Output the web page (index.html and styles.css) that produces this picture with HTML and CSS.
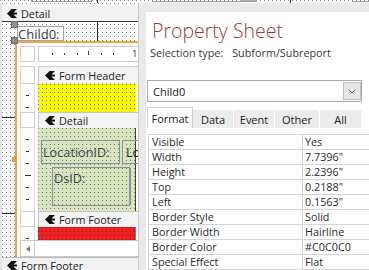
FILE: index.html
```html
<!DOCTYPE html>
<html lang="en">

<head>
    <meta charset="UTF-8">
    <title>Property Sheet</title>
    <link rel="stylesheet" href="styles.css">
</head>

<body>
    <div class="screen">
        <!-- bottom edge of the section above -->
        <div class="top-strip">
            <div class="ctl ctl-a"></div>
            <div class="ctl ctl-b"><span class="ctl-btn"></span></div>
            <div class="ctl ctl-c"></div>
        </div>

        <div class="main">
            <!-- design view -->
            <div class="designer">
                <div class="section-bar">
                    <svg class="bar-icon" width="10" height="9" viewBox="0 0 10 9"><path d="M0 4.5 L4.5 0 H10 L6.5 3.5 H10 V5.5 H6.5 L10 9 H4.5 Z" /></svg>
                    Detail
                </div>
                <div class="surface">
                    <span class="handle handle-label"></span>
                    <div class="label label-child">Child0:</div>
                    <span class="handle handle-sub"></span>
                    <span class="handle-mid"></span>

                    <div class="subform">
                        <div class="corner"></div>
                        <div class="ruler"><span class="ruler-num">1</span></div>

                        <div class="sel"></div>
                        <div class="bar">
                            <svg class="bar-icon" width="10" height="9" viewBox="0 0 10 9"><path d="M0 4.5 L4.5 0 H10 L6.5 3.5 H10 V5.5 H6.5 L10 9 H4.5 Z" /></svg>
                            Form Header
                        </div>

                        <div class="vticks"></div>
                        <div class="sec sec-yellow"></div>

                        <div class="sel"></div>
                        <div class="bar">
                            <svg class="bar-icon" width="10" height="9" viewBox="0 0 10 9"><path d="M0 4.5 L4.5 0 H10 L6.5 3.5 H10 V5.5 H6.5 L10 9 H4.5 Z" /></svg>
                            Detail
                        </div>

                        <div class="vticks"></div>
                        <div class="sec sec-green">
                            <div class="label label-loc">LocationID:</div>
                            <div class="label textbox">Lo</div>
                            <div class="label label-ds">DsID:</div>
                        </div>

                        <div class="sel"></div>
                        <div class="bar">
                            <svg class="bar-icon" width="10" height="9" viewBox="0 0 10 9"><path d="M0 4.5 L4.5 0 H10 L6.5 3.5 H10 V5.5 H6.5 L10 9 H4.5 Z" /></svg>
                            Form Footer
                        </div>

                        <div class="vticks"></div>
                        <div class="sec sec-red"></div>

                        <div class="hscroll">
                            <span class="sb-arrow"><span class="tri"></span></span>
                        </div>
                    </div>
                </div>
                <div class="section-bar section-bar-bottom">
                    <svg class="bar-icon" width="10" height="9" viewBox="0 0 10 9"><path d="M0 4.5 L4.5 0 H10 L6.5 3.5 H10 V5.5 H6.5 L10 9 H4.5 Z" /></svg>
                    Form Footer
                </div>
            </div>

            <!-- property sheet -->
            <div class="pane">
                <div class="sheet">
                    <h1 class="sheet-title">Property Sheet</h1>
                    <div class="selection">Selection type:<span class="sel-type">Subform/Subreport</span></div>

                    <div class="combo">
                        <span class="combo-text">Child0</span>
                        <span class="combo-btn">
                            <svg width="8" height="5" viewBox="0 0 8 5"><polyline points="0.5,0.5 4,4 7.5,0.5" /></svg>
                        </span>
                    </div>

                    <div class="tabs">
                        <span class="tab tab-active">Format</span>
                        <span class="tab tab-data">Data</span>
                        <span class="tab tab-event">Event</span>
                        <span class="tab tab-other">Other</span>
                        <span class="tab tab-all">All</span>
                    </div>

                    <div class="props">
                        <div class="prop-name">Visible</div><div class="prop-val">Yes</div>
                        <div class="prop-name">Width</div><div class="prop-val">7.7396"</div>
                        <div class="prop-name">Height</div><div class="prop-val">2.2396"</div>
                        <div class="prop-name">Top</div><div class="prop-val">0.2188"</div>
                        <div class="prop-name">Left</div><div class="prop-val">0.1563"</div>
                        <div class="prop-name">Border Style</div><div class="prop-val">Solid</div>
                        <div class="prop-name">Border Width</div><div class="prop-val">Hairline</div>
                        <div class="prop-name">Border Color</div><div class="prop-val">#C0C0C0</div>
                        <div class="prop-name">Special Effect</div><div class="prop-val">Flat</div>
                    </div>
                </div>
            </div>
        </div>
    </div>
</body>

</html>
```

FILE: styles.css
```css
* {
    box-sizing: border-box;
}

body {
    margin: 0;
    font-family: "Open Sans", "Noto Sans", sans-serif;
    color: #222;
}

.screen {
    width: 369px;
    height: 270px;
    overflow: hidden;
    background: #fff;
}

/* design grid: one dot every 4px */
.top-strip {
    position: relative;
    height: 3px;
    overflow: hidden;
    background:
        linear-gradient(#333, #333) 97px 0 / 1px 100% no-repeat,
        linear-gradient(#333, #333) 290px 0 / 1px 100% no-repeat,
        conic-gradient(at 1px 1px, transparent 75%, #8a8a8a 0) 0 0 / 4px 4px,
        #fff;
}

.ctl {
    position: absolute;
    top: -10px;
    height: 12px;
    border: 1px solid #9a9a9a;
}

.ctl-a {
    left: 31px;
    width: 61px;
}

.ctl-b {
    left: 152px;
    width: 105px;
}

.ctl-btn {
    position: absolute;
    right: 0;
    top: 0;
    width: 16px;
    height: 100%;
    background: #b4b4b4;
}

.ctl-c {
    left: 352px;
    width: 40px;
}

.main {
    display: flex;
    height: 267px;
}

/* ---------- design view ---------- */
.designer {
    width: 138px;
    flex: none;
    overflow: hidden;
    border-left: 2px solid #e6e6e6;
    background: conic-gradient(at 1px 1px, transparent 75%, #8a8a8a 0) 0 0 / 4px 4px, #fff;
}

.section-bar {
    display: flex;
    align-items: center;
    gap: 4px;
    height: 16px;
    margin-top: 3px;
    padding-left: 5px;
    background: #f2f2f2;
    border-bottom: 1px solid #333;
    font-size: 10.8px;
    white-space: nowrap;
}

.section-bar-bottom {
    margin-top: 0;
    border-bottom: 0;
    border-top: 1px solid #bdbdbd;
}

.bar-icon {
    flex: none;
    fill: #111;
}

.surface {
    position: relative;
    height: 235px;
    background:
        linear-gradient(#333, #333) 95px 0 / 1px 100% no-repeat,
        linear-gradient(#333, #333) 0 95px / 100% 1px no-repeat,
        linear-gradient(#333, #333) 0 191px / 100% 1px no-repeat,
        conic-gradient(at 1px 1px, transparent 75%, #8a8a8a 0) 0 2px / 4px 4px,
        #fff;
}

.handle {
    position: absolute;
    left: 9px;
    width: 7px;
    height: 7px;
    background: #8e8e8e;
    border: 1px solid #6c6c6c;
    z-index: 2;
}

.handle-label {
    top: -1px;
}

.handle-sub {
    top: 15px;
}

.handle-mid {
    position: absolute;
    left: 10px;
    top: 135px;
    width: 5px;
    height: 5px;
    background: #f39a2c;
    z-index: 2;
}

.label {
    position: absolute;
    border: 1px solid #8891a3;
    color: #3d4454;
    white-space: nowrap;
}

.label-child {
    left: 15px;
    top: 4px;
    width: 47px;
    height: 15px;
    border-color: #a5a5a5;
    background: #fff;
    font-size: 13px;
    line-height: 14px;
    color: #333a48;
}

.subform {
    position: absolute;
    left: 13px;
    top: 19px;
    width: 130px;
    height: 216px;
    padding: 3px 0 0 3px;
    border-left: 2px solid #f5a33e;
    border-top: 2px solid #f5a33e;
    background: #fff;
    display: grid;
    grid-template-columns: 15px 1fr;
    grid-template-rows: 20px 18px 28px 16px 83px 16px 13px 17px;
    column-gap: 3px;
}

.corner {
    height: 16px;
    border: 1px solid #cfcfcf;
}

.ruler {
    height: 16px;
    display: flex;
    align-items: center;
    border: 1px solid #cfcfcf;
    border-right: 0;
    background:
        linear-gradient(#444, #444) 13px 6px / 1px 2px no-repeat,
        linear-gradient(#444, #444) 25px 6px / 1px 2px no-repeat,
        linear-gradient(#444, #444) 38px 6px / 1px 2px no-repeat,
        linear-gradient(#444, #444) 49px 4px / 1px 4px no-repeat,
        linear-gradient(#444, #444) 62px 6px / 1px 2px no-repeat,
        linear-gradient(#444, #444) 74px 6px / 1px 2px no-repeat,
        #fff;
}

.ruler-num {
    margin-left: 93px;
    font-size: 9.5px;
    line-height: 10px;
    color: #333;
}

.sel {
    border: 1px solid #cfcfcf;
    background: #fff;
}

.vticks {
    border-left: 1px solid #dedede;
    border-right: 1px solid #dedede;
    background:
        linear-gradient(#333, #333) 4px 47px / 6px 1px no-repeat,
        repeating-linear-gradient(to bottom, transparent 0 11px, #333 11px 12px) 5px 0 / 3px 100% no-repeat,
        #fff;
}

.bar {
    display: flex;
    align-items: center;
    gap: 4px;
    padding-left: 6px;
    background: #f3f3f3;
    border-top: 1px solid #c8c8c8;
    border-left: 1px solid #c8c8c8;
    font-size: 10.8px;
    white-space: nowrap;
}

.sec {
    width: 98px;
    position: relative;
}

.sec-yellow {
    background: conic-gradient(at 1px 1px, transparent 75%, rgba(0, 0, 0, .5) 0) 0 0 / 4px 4px, #ffff00;
}

.sec-green {
    border-right: 1px solid #3c3c3c;
    background: conic-gradient(at 1px 1px, transparent 75%, rgba(0, 0, 0, .45) 0) 0 0 / 4px 4px, #d7e4bd;
}

.sec-red {
    background: conic-gradient(at 1px 1px, transparent 75%, rgba(0, 0, 0, .45) 0) 0 0 / 4px 4px, #ee2024;
    border-right: 1px solid #3a9aa0;
}

.label-loc {
    left: 3px;
    top: 12px;
    width: 79px;
    height: 24px;
    padding-left: 1px;
    font-size: 12.7px;
    line-height: 22px;
}

.textbox {
    left: 84px;
    top: 12px;
    width: 40px;
    height: 24px;
    padding-left: 3px;
    font-size: 12.7px;
    line-height: 22px;
    color: #222;
}

.label-ds {
    left: 14px;
    top: 39px;
    width: 78px;
    height: 39px;
    padding-left: 1px;
    font-size: 12.7px;
    line-height: 20px;
    box-shadow: 2px 0 0 -1px #8891a3;
}

.hscroll {
    grid-column: 1 / -1;
    display: flex;
    border-top: 1px solid #c8c8c8;
    border-bottom: 1px solid #c8c8c8;
    border-left: 1px solid #c8c8c8;
    background: #fff;
}

.sb-arrow {
    width: 14px;
    display: flex;
    align-items: center;
    justify-content: center;
    border-right: 1px solid #c8c8c8;
}

.tri {
    width: 0;
    height: 0;
    border-top: 3.5px solid transparent;
    border-bottom: 3.5px solid transparent;
    border-right: 4px solid #777;
}

/* ---------- property sheet ---------- */
.pane {
    flex: 1;
    min-width: 0;
    overflow: hidden;
    background: #e9e9e9;
    border-left: 1px solid #c9c9c9;
    padding: 9px 0 0 7px;
}

.sheet {
    height: 100%;
    background: #fff;
    overflow: hidden;
}

.sheet-title {
    margin: 7px 0 0;
    padding-left: 6px;
    font-size: 19.5px;
    font-weight: 300;
    line-height: 24px;
    color: #a4373a;
    white-space: nowrap;
}

.selection {
    margin-top: 3px;
    padding-left: 4px;
    font-size: 10.8px;
    line-height: 14px;
    color: #3a3a3a;
    white-space: nowrap;
}

.sel-type {
    margin-left: 9px;
}

.combo {
    display: flex;
    align-items: center;
    height: 22px;
    margin: 20px 7px 0 1px;
    border: 1px solid #ababab;
}

.combo-text {
    padding-left: 5px;
    font-size: 11px;
}

.combo-btn {
    display: flex;
    align-items: center;
    justify-content: center;
    width: 18px;
    height: 18px;
    margin-left: auto;
    background: #e5e5e5;
    border: 1px solid #bdbdbd;
}

.combo-btn polyline {
    fill: none;
    stroke: #666;
    stroke-width: 1;
}

.tabs {
    display: flex;
    align-items: flex-end;
    height: 21px;
    margin-top: 5px;
    padding-left: 1px;
}

.tab {
    display: flex;
    align-items: center;
    justify-content: center;
    height: 18px;
    margin-left: 1px;
    background: #ececec;
    font-size: 11px;
}

.tab-active {
    width: 46px;
    height: 21px;
    margin-left: 0;
    background: #fff;
    border: 1px solid #d2d2d2;
    border-bottom: 0;
}

.tab-data {
    width: 40px;
    margin-left: 0;
}

.tab-event {
    width: 40px;
}

.tab-other {
    width: 44px;
}

.tab-all {
    width: 41px;
}

.props {
    display: grid;
    grid-template-columns: 154px 80px;
    margin: 6px 0 0 2px;
    border-top: 1px solid #d4d4d4;
    border-left: 1px solid #d4d4d4;
    font-size: 10.8px;
    color: #2a2a2a;
}

.prop-name,
.prop-val {
    height: 15px;
    line-height: 14px;
    border-bottom: 1px solid #d4d4d4;
    white-space: nowrap;
}

.prop-name {
    padding-left: 3px;
    border-right: 1px solid #d4d4d4;
}

.prop-val {
    padding-left: 2px;
}
```
